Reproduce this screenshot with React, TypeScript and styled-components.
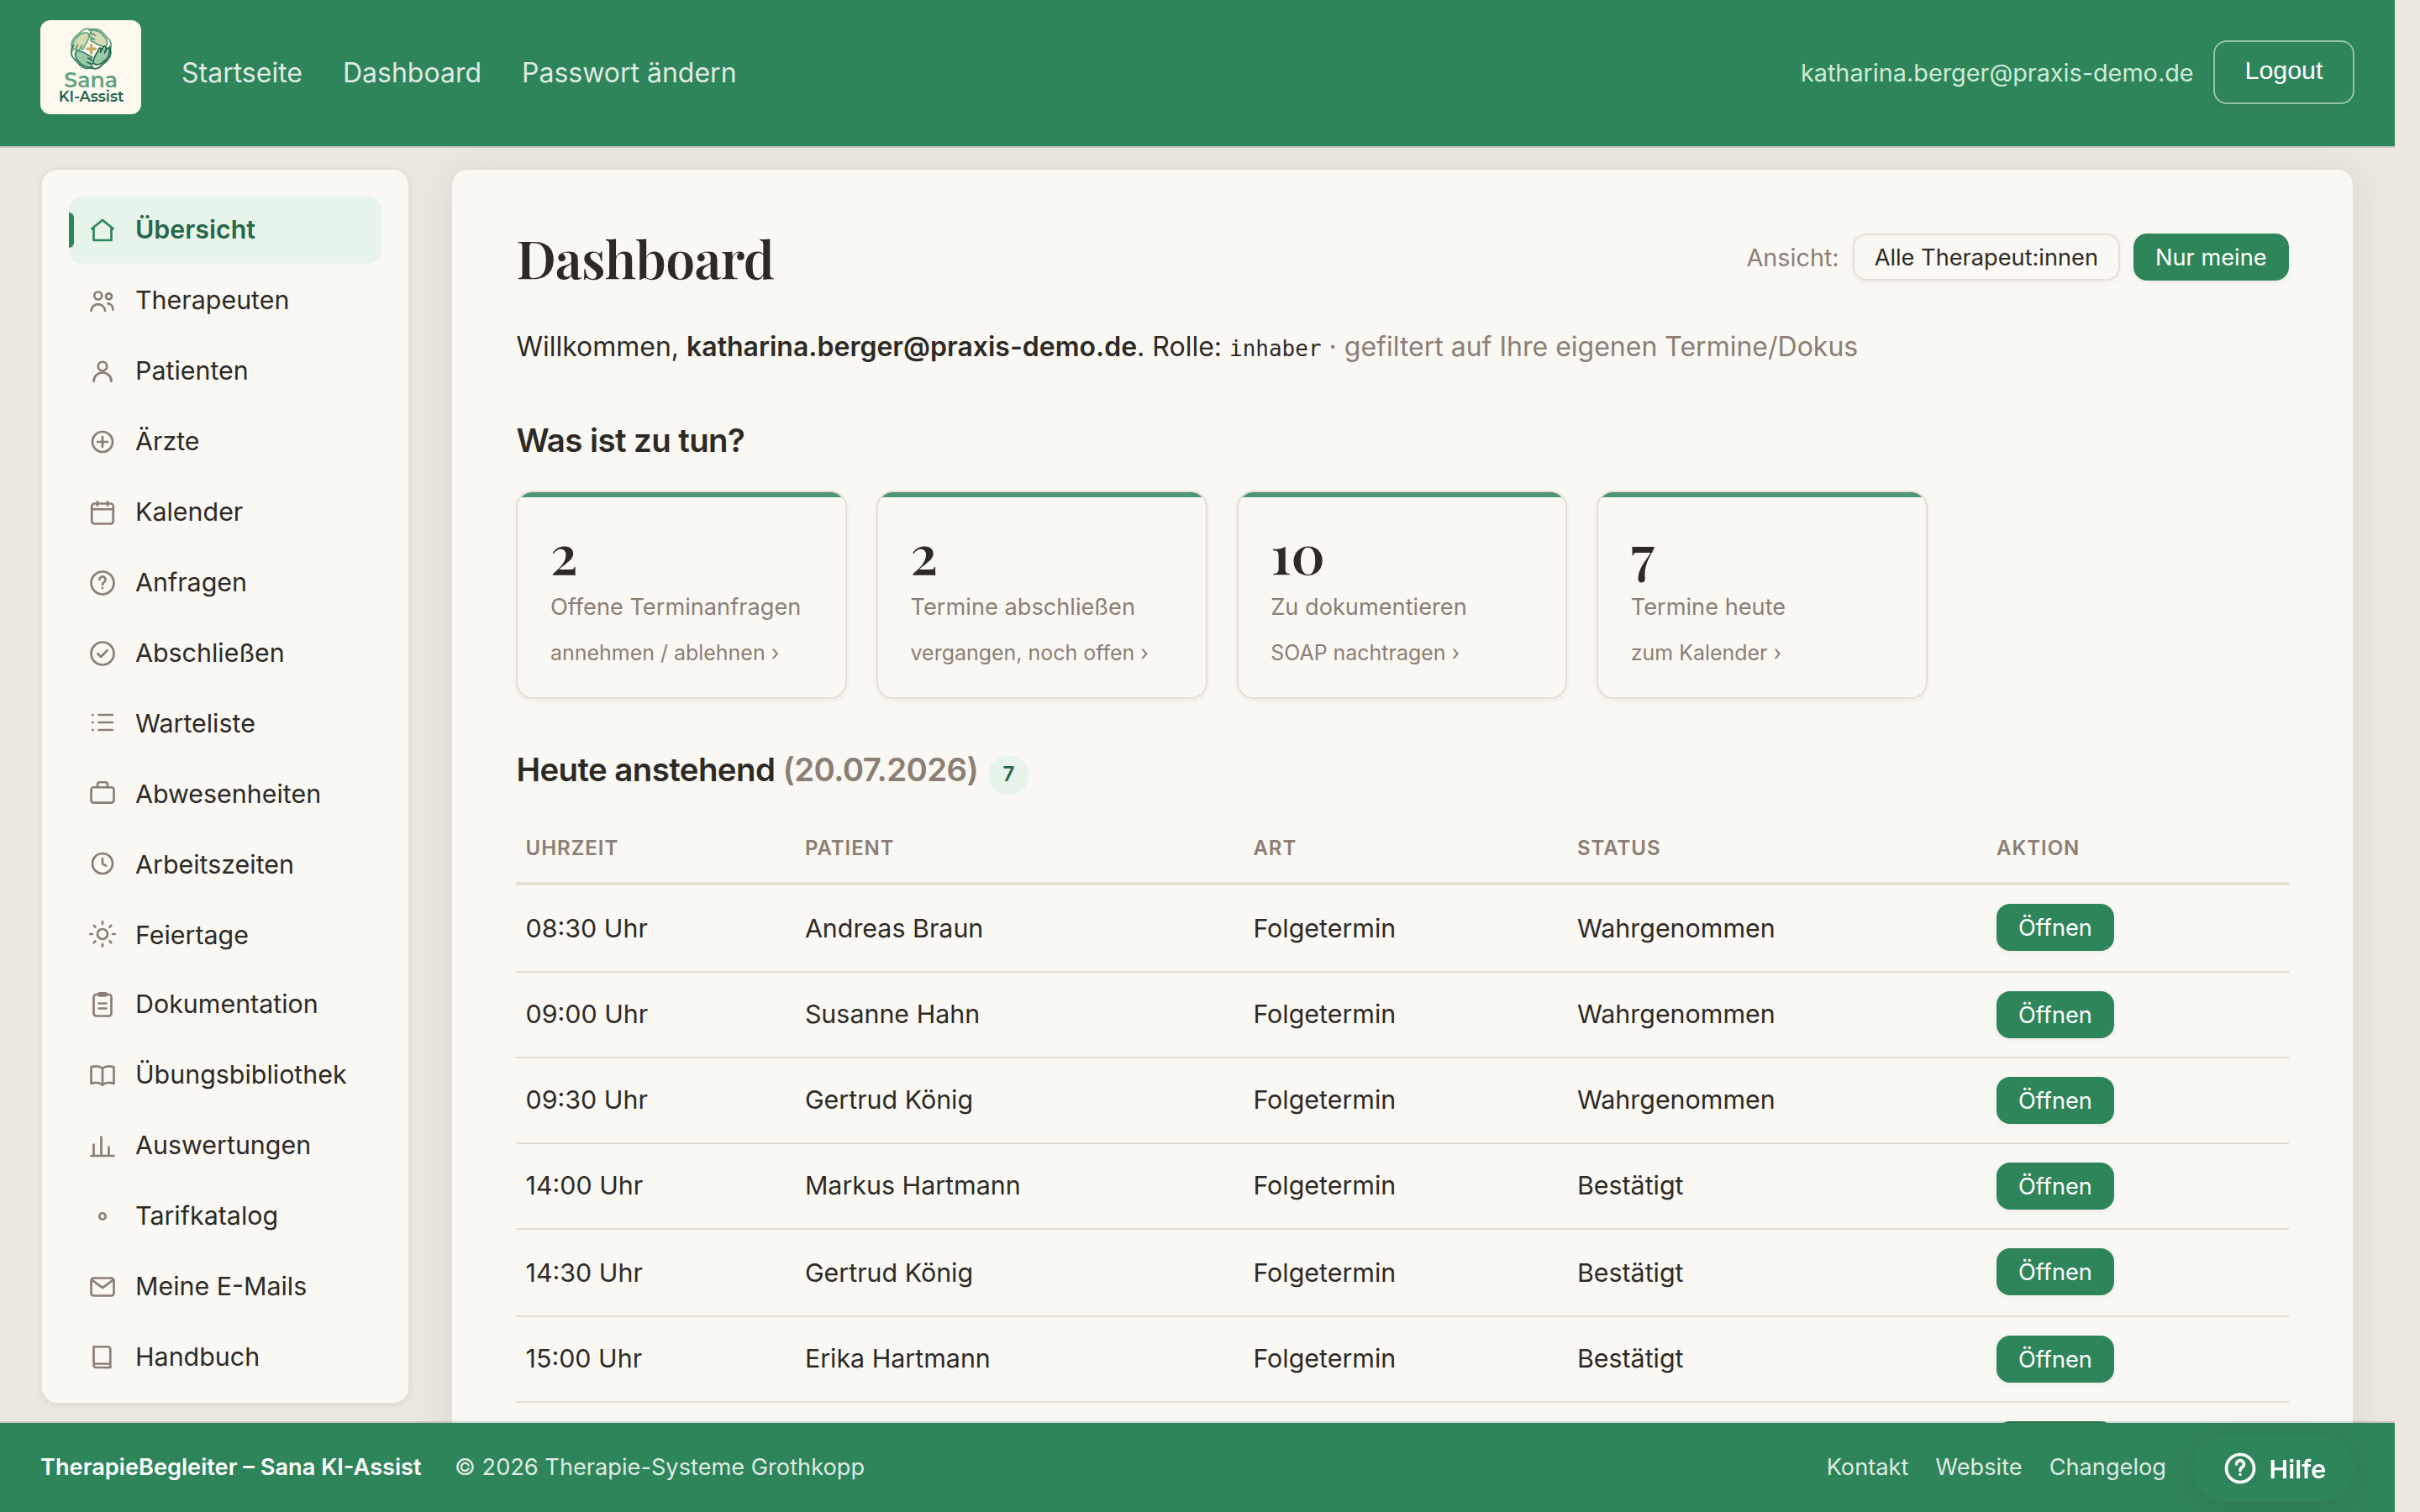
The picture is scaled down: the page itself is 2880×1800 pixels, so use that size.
import React, { useState } from 'react'
import styled, { createGlobalStyle, css } from 'styled-components'

const GlobalStyle = createGlobalStyle`
  *, *::before, *::after {
    box-sizing: border-box;
  }

  body {
    margin: 0;
    background: #ece7e1;
    color: #2d2a26;
    font-family: Inter, 'Liberation Sans', sans-serif;
    overflow: hidden;
  }

  a {
    color: inherit;
    text-decoration: none;
  }
`

const Page = styled.div`
  display: flex;
  flex-direction: column;
  width: 2850px;
  height: 1800px;
`

const Header = styled.header`
  display: flex;
  align-items: center;
  flex-shrink: 0;
  height: 176px;
  padding: 0 48px 2px;
  background: #2f855a;
  background-clip: padding-box;
  border-bottom: 2px solid rgba(0, 0, 0, 0.15);
`

const Logo = styled.svg`
  align-self: flex-start;
  width: 120px;
  height: 112px;
  margin: 24px 48px 0 0;
  border-radius: 12px;
  background: #fdf9ee;
`

const Nav = styled.nav`
  display: flex;
  gap: 48px;
  font-size: 32px;
  color: rgba(255, 255, 255, 0.85);
`

const UserEmail = styled.span`
  margin-left: auto;
  margin-right: 23.4px;
  font-size: 28.8px;
  color: #cdebd9;
`

const LogoutButton = styled.button`
  width: 168px;
  height: 76px;
  padding: 0 0 5px;
  border: 2px solid rgba(255, 255, 255, 0.5);
  border-radius: 16px;
  background: transparent;
  box-shadow: 0 2px 6px rgba(0, 0, 0, 0.08);
  color: #fff;
  font-family: 'Liberation Sans', Arial, sans-serif;
  font-size: 30.4px;
`

const Body = styled.div`
  display: flex;
  align-items: flex-start;
  flex-shrink: 0;
  gap: 48px;
  height: 1518px;
  padding: 24px 48px 0;
  overflow: hidden;
`

const Sidebar = styled.aside`
  display: flex;
  flex-direction: column;
  gap: 4px;
  flex-shrink: 0;
  width: 440px;
  height: 1472px;
  padding: 32px;
  border: 2px solid #e5dfd3;
  border-radius: 20px;
  background: #faf8f3;
  box-shadow: 0 2px 6px rgba(45, 42, 38, 0.06);
`

const SidebarLink = styled.a<{ $active?: boolean; $low?: boolean }>`
  position: relative;
  display: flex;
  align-items: center;
  flex-shrink: 0;
  gap: 21px;
  height: 80px;
  padding: 0 22px;
  border-radius: 16px;
  font-size: 30.4px;
  line-height: 36px;

  /* the first group sits slightly closer to the second one */
  &:nth-child(8) {
    margin-top: -2px;
  }

  svg {
    width: 36px;
    height: 36px;
    color: #8b7e74;
  }

  span {
    padding: ${(p) => (p.$low ? '2px 0 0' : '0 0 2px')};
  }

  ${(p) =>
    p.$active &&
    css`
      background: #e6f4ea;
      color: #276749;
      font-weight: 600;

      svg {
        color: #2f855a;
      }

      &::before {
        content: '';
        position: absolute;
        left: 0;
        top: 19px;
        width: 6px;
        height: 42px;
        border-radius: 0 6px 6px 0;
        background: #2f855a;
      }
    `}
`

const Main = styled.main`
  flex: 1;
  height: 1600px;
  padding: 66px 76.4px;
  border: 2px solid #e5dfd3;
  border-radius: 20px;
  background: #faf8f3;
  box-shadow: 0 6px 48px rgba(45, 42, 38, 0.09);
`

const TitleRow = styled.div`
  display: flex;
  align-items: center;
  justify-content: space-between;
  height: 76px;
`

const Title = styled.h1`
  margin: 0;
  font-family: 'Playfair Display', 'Liberation Serif', serif;
  font-size: 62.4px;
  font-weight: 600;
  letter-spacing: -0.01em;
  line-height: 76px;
`

const ViewSwitch = styled.div`
  display: flex;
  align-items: center;
  gap: 16px;
  font-size: 28.8px;
  color: #8b7e74;
`

const SmallButton = styled.button<{ $primary?: boolean }>`
  min-width: 140px;
  height: 56px;
  padding: 1px 24px 0;
  border: 2px solid ${(p) => (p.$primary ? '#2f855a' : '#e5dfd3')};
  border-radius: 16px;
  background: ${(p) => (p.$primary ? '#2f855a' : '#faf8f3')};
  box-shadow: 0 2px 6px rgba(45, 42, 38, 0.06);
  color: ${(p) => (p.$primary ? '#fff' : '#2d2a26')};
  font-family: inherit;
  font-size: 27.2px;
  line-height: 51px;
`

const Welcome = styled.p`
  margin: 43px 0 0;
  font-size: 32px;
  line-height: 52px;

  strong {
    font-weight: 600;
  }

  code {
    font-family: 'DejaVu Sans Mono', monospace;
    font-size: 26px;
    line-height: 1;
  }
`

const Muted = styled.span`
  color: #8b7e74;
`

const SectionTitle = styled.h2<{ $top: number }>`
  display: flex;
  align-items: center;
  height: 48px;
  margin: ${(p) => p.$top}px 0 0;
  font-size: 38.4px;
  font-weight: 600;
  letter-spacing: -0.015em;
  line-height: 48px;
  white-space: pre;
`

const CountBadge = styled.span`
  width: 48px;
  height: 46px;
  margin: 14px 0 0 12px;
  padding-bottom: 3px;
  border-radius: 24px;
  background: #e6f4ea;
  color: #276749;
  font-size: 24px;
  letter-spacing: 0;
  line-height: 43px;
  text-align: center;
`

const TodoGrid = styled.div`
  display: grid;
  grid-template-columns: repeat(4, 393.6px);
  gap: 35px;
  margin-top: 36px;
`

const TodoCard = styled.a`
  display: block;
  height: 248px;
  padding: 34px 38.6px 0;
  border: 2px solid #e5dfd3;
  border-radius: 20px;
  background: #faf8f3;
  box-shadow: 0 2px 6px rgba(45, 42, 38, 0.06);
  color: #8b7e74;
  overflow: hidden;

  &::before {
    content: '';
    display: block;
    height: 6px;
    margin: -34px -39px 34px;
    background: #4e9672;
  }
`

const TodoNumber = styled.div`
  color: #2d2a26;
  font-family: 'Playfair Display', 'Liberation Serif', serif;
  font-size: 64px;
  font-weight: 600;
  line-height: 64px;
`

const TodoLabel = styled.div`
  margin-top: 13px;
  font-size: 27.2px;
  line-height: 40px;
`

const TodoHint = styled.div`
  margin-top: 14px;
  font-size: 24.96px;
  line-height: 40px;
`

const Table = styled.table`
  width: 100%;
  margin-top: 32px;
  border-collapse: separate;
  border-spacing: 0;
  table-layout: fixed;
`

const Th = styled.th<{ $width?: number }>`
  width: ${(p) => (p.$width ? `${p.$width}px` : 'auto')};
  height: 82px;
  padding: 0 11.2px 20px;
  border-bottom: 4px solid #e5dfd3;
  color: #8b7e74;
  font-size: 24px;
  font-weight: 600;
  letter-spacing: 0.04em;
  line-height: 40px;
  text-align: left;
  text-transform: uppercase;
  vertical-align: bottom;
`

const Td = styled.td<{ $height: number }>`
  height: ${(p) => p.$height}px;
  padding: 0 11.2px 21px;
  border-bottom: 2px solid #e5dfd3;
  font-size: 30.4px;
  line-height: 60px;
  vertical-align: bottom;
`

const ActionTd = styled(Td)`
  padding: 22px 11.2px 0;
  line-height: 0;
  vertical-align: top;
`

const Footer = styled.footer`
  position: relative;
  display: flex;
  align-items: center;
  flex-shrink: 0;
  height: 108px;
  margin-top: -2px;
  padding: 0 272px 2px 48px;
  background: #2f855a;
  background-clip: padding-box;
  border-top: 2px solid rgba(0, 0, 0, 0.15);
  color: rgba(255, 255, 255, 0.85);
  font-size: 27.2px;

  strong {
    margin-right: 39.4px;
    color: #fff;
    font-weight: 600;
  }
`

const FooterLinks = styled.nav`
  display: flex;
  gap: 32px;
  margin-left: auto;
`

const HelpButton = styled.button`
  position: fixed;
  left: 2610px;
  top: 1708px;
  display: flex;
  align-items: center;
  gap: 12.6px;
  width: 192px;
  height: 80px;
  padding: 0 0 0 34px;
  border: none;
  border-radius: 40px;
  background: #2f855a;
  box-shadow: 0 8px 40px rgba(45, 42, 38, 0.14);
  color: #fff;
  font-family: inherit;
  font-size: 30.4px;
  font-weight: 600;

  svg {
    width: 44px;
    height: 44px;
  }

  span {
    padding-top: 2px;
  }
`

const Icon: React.FC<{ children: React.ReactNode; width?: number }> = ({ children, width = 1.8 }) => (
  <svg
    viewBox="0 0 24 24"
    fill="none"
    stroke="currentColor"
    strokeWidth={width}
    strokeLinecap="round"
    strokeLinejoin="round"
  >
    {children}
  </svg>
)

const question = (
  <>
    <circle cx="12" cy="12" r="9" />
    <path d="M9.6 9.3a2.4 2.4 0 1 1 3.6 2.1c-.8.5-1.2 1-1.2 2M12 16h.01" />
  </>
)

const navItems: { label: string; icon: React.ReactNode; low?: boolean }[] = [
  { label: 'Übersicht', icon: <path d="M3.6 10.8 12 4l8.4 6.8M5 9.8V20h14V9.8" /> },
  {
    label: 'Therapeuten',
    icon: (
      <>
        <circle cx="8.5" cy="8" r="3" />
        <path d="M3 20a5.5 5.2 0 0 1 11 0" />
        <circle cx="17" cy="8.6" r="2.3" />
        <path d="M16.2 14.3c2.5.1 4.1 2 4.1 4.8" />
      </>
    ),
  },
  {
    label: 'Patienten',
    icon: (
      <>
        <circle cx="12" cy="8" r="3.5" />
        <path d="M5 20a7 7 0 0 1 14 0" />
      </>
    ),
  },
  {
    label: 'Ärzte',
    icon: (
      <>
        <circle cx="12" cy="12" r="8" />
        <path d="M12 8v8M8 12h8" />
      </>
    ),
  },
  {
    label: 'Kalender',
    icon: (
      <>
        <rect x="3.5" y="5" width="17" height="16" rx="2" />
        <path d="M3.5 9.5h17M8 3.5v3M16 3.5v3" />
      </>
    ),
  },
  { label: 'Anfragen', icon: question },
  {
    label: 'Abschließen',
    icon: (
      <>
        <circle cx="12" cy="12" r="9" />
        <path d="M8.3 12.2l2.5 2.5 5-5.3" />
      </>
    ),
  },
  { label: 'Warteliste', low: true, icon: <path d="M9 6h11M9 12h11M9 18h11M4.1 6h.3M4.1 12h.3M4.1 18h.3" /> },
  {
    label: 'Abwesenheiten',
    low: true,
    icon: (
      <>
        <rect x="3" y="7.5" width="18" height="12.2" rx="2" />
        <path d="M8 7.5V5.3a1.8 1.8 0 0 1 1.8-1.8h4.4A1.8 1.8 0 0 1 16 5.3v2.2" />
      </>
    ),
  },
  {
    label: 'Arbeitszeiten',
    low: true,
    icon: (
      <>
        <circle cx="12" cy="12" r="8" />
        <path d="M12 8v4.2l2.8 1.6" />
      </>
    ),
  },
  {
    label: 'Feiertage',
    low: true,
    icon: (
      <>
        <circle cx="12" cy="12" r="4" />
        <path d="M12 2.2v1.7M12 20.1v1.7M2.2 12h1.7M20.1 12h1.7M5.1 5.1l1.2 1.2M17.7 17.7l1.2 1.2M5.1 18.9l1.2-1.2M17.7 6.3l1.2-1.2" />
      </>
    ),
  },
  {
    label: 'Dokumentation',
    icon: (
      <>
        <rect x="5" y="4" width="14" height="17" rx="2" />
        <rect x="8.8" y="2.9" width="6.4" height="2" rx="1" />
        <path d="M9 11h6M9 15h6" />
      </>
    ),
  },
  {
    label: 'Übungsbibliothek',
    icon: (
      <path d="M3 5.6c3.4-1 6.6-.8 9 .9 2.4-1.7 5.6-1.9 9-.9v13c-3.4-1-6.6-.8-9 .9-2.4-1.7-5.6-1.9-9-.9zM12 6.5V20" />
    ),
  },
  { label: 'Auswertungen', icon: <path d="M3 20h18M5 20v-9M11 20V5M17 20v-7" /> },
  { label: 'Tarifkatalog', icon: <circle cx="12" cy="12" r="2.5" /> },
  {
    label: 'Meine E-Mails',
    icon: (
      <>
        <rect x="3" y="5" width="18" height="14" rx="2" />
        <path d="M3.6 6.5l8.4 6.3 8.4-6.3" />
      </>
    ),
  },
  {
    label: 'Handbuch',
    icon: <path d="M5 3.5h11.2a2 2 0 0 1 2 2V20H7a2 2 0 0 1-2-2zM5.3 17h12.9" />,
  },
]

const todos = [
  { count: 2, label: 'Offene Terminanfragen', hint: 'annehmen / ablehnen ›' },
  { count: 2, label: 'Termine abschließen', hint: 'vergangen, noch offen ›' },
  { count: 10, label: 'Zu dokumentieren', hint: 'SOAP nachtragen ›' },
  { count: 7, label: 'Termine heute', hint: 'zum Kalender ›' },
]

const appointments = [
  { time: '08:30 Uhr', patient: 'Andreas Braun', kind: 'Folgetermin', status: 'Wahrgenommen', height: 104 },
  { time: '09:00 Uhr', patient: 'Susanne Hahn', kind: 'Folgetermin', status: 'Wahrgenommen', height: 102 },
  { time: '09:30 Uhr', patient: 'Gertrud König', kind: 'Folgetermin', status: 'Wahrgenommen', height: 102 },
  { time: '14:00 Uhr', patient: 'Markus Hartmann', kind: 'Folgetermin', status: 'Bestätigt', height: 102 },
  { time: '14:30 Uhr', patient: 'Gertrud König', kind: 'Folgetermin', status: 'Bestätigt', height: 104 },
  { time: '15:00 Uhr', patient: 'Erika Hartmann', kind: 'Folgetermin', status: 'Bestätigt', height: 102 },
  { time: '', patient: '', kind: '', status: '', height: 102 },
]

const hands = [
  { angle: 0, fill: '#d8dcb6', stroke: '#6aa883' },
  { angle: 90, fill: '#d8dcb6', stroke: '#5b9c7a' },
  { angle: 180, fill: '#9ccaa8', stroke: '#23694f' },
  { angle: 270, fill: '#9ccaa8', stroke: '#2f7a5c' },
]

const BrandLogo: React.FC = () => (
  <Logo viewBox="0 0 120 112">
    <g transform="translate(60.5 34)" strokeWidth="1.7" strokeLinejoin="round" strokeLinecap="round">
      {hands.map((h) => (
        <g key={h.angle} transform={`rotate(${h.angle})`} stroke={h.stroke} fill="none">
          <path
            fill={h.fill}
            d="M-2-17C-7-21-12-18-15-15-20-12-22-8-22-1-21 2-19 1-18-1L-16-5-18 1C-17 4-15 3-14 1L-11-4-12 0C-10 2-9 0-8-3-5-7-3-11-2-17z"
          />
          <path d="M4-21C0-24-6-25-10-22L-20-13C-24-9-24-3-22 3" />
        </g>
      ))}
    </g>
    <path
      fill="#c4ad66"
      d="M60.6 28c1.1 0 1.8.8 1.8 1.8v2.8h2.9c2.5 0 2.5 3.4 0 3.4h-2.9v2.9c0 2.4-3.5 2.4-3.5 0V36H56c-2.5 0-2.5-3.4 0-3.4h2.9v-2.8c0-1 .7-1.8 1.7-1.8z"
    />
    <text x="60.2" y="80" textAnchor="middle" fontFamily="Montserrat" fontWeight="600" fontSize="25.2" fill="#62a180">
      Sana
    </text>
    <text x="60.6" y="97" textAnchor="middle" fontFamily="Montserrat" fontWeight="600" fontSize="17.6" fill="#1f6350">
      KI-Assist
    </text>
  </Logo>
)

const App: React.FC = () => {
  const [active, setActive] = useState('Übersicht')
  const [onlyMine, setOnlyMine] = useState(true)

  return (
    <>
      <GlobalStyle />
      <Page>
        <Header>
          <BrandLogo />
          <Nav>
            <a>Startseite</a>
            <a>Dashboard</a>
            <a>Passwort ändern</a>
          </Nav>
          <UserEmail>katharina.berger@praxis-demo.de</UserEmail>
          <LogoutButton>Logout</LogoutButton>
        </Header>

        <Body>
          <Sidebar>
            {navItems.map((item) => (
              <SidebarLink
                key={item.label}
                $active={item.label === active}
                $low={item.low}
                onClick={() => setActive(item.label)}
              >
                <Icon>{item.icon}</Icon>
                <span>{item.label}</span>
              </SidebarLink>
            ))}
          </Sidebar>

          <Main>
            <TitleRow>
              <Title>Dashboard</Title>
              <ViewSwitch>
                <span>Ansicht:</span>
                <SmallButton $primary={!onlyMine} onClick={() => setOnlyMine(false)}>
                  Alle Therapeut:innen
                </SmallButton>
                <SmallButton $primary={onlyMine} onClick={() => setOnlyMine(true)}>
                  Nur meine
                </SmallButton>
              </ViewSwitch>
            </TitleRow>

            <Welcome>
              Willkommen, <strong>katharina.berger@praxis-demo.de</strong>. Rolle: <code>inhaber</code>{' '}
              <Muted>· gefiltert auf Ihre eigenen Termine/Dokus</Muted>
            </Welcome>

            <SectionTitle $top={61}>Was ist zu tun?</SectionTitle>
            <TodoGrid>
              {todos.map((todo) => (
                <TodoCard key={todo.label}>
                  <TodoNumber>{todo.count}</TodoNumber>
                  <TodoLabel>{todo.label}</TodoLabel>
                  <TodoHint>{todo.hint}</TodoHint>
                </TodoCard>
              ))}
            </TodoGrid>

            <SectionTitle $top={60}>
              Heute anstehend <Muted>(20.07.2026)</Muted>
              <CountBadge>7</CountBadge>
            </SectionTitle>

            <Table>
              <thead>
                <tr>
                  <Th $width={332.3}>Uhrzeit</Th>
                  <Th $width={533.5}>Patient</Th>
                  <Th $width={385.5}>Art</Th>
                  <Th $width={499.1}>Status</Th>
                  <Th>Aktion</Th>
                </tr>
              </thead>
              <tbody>
                {appointments.map((a, i) => (
                  <tr key={i}>
                    <Td $height={a.height}>{a.time}</Td>
                    <Td $height={a.height}>{a.patient}</Td>
                    <Td $height={a.height}>{a.kind}</Td>
                    <Td $height={a.height}>{a.status}</Td>
                    <ActionTd $height={a.height}>
                      <SmallButton $primary>{a.time && 'Öffnen'}</SmallButton>
                    </ActionTd>
                  </tr>
                ))}
              </tbody>
            </Table>
          </Main>
        </Body>

        <Footer>
          <strong>TherapieBegleiter – Sana KI-Assist</strong>
          <span>© 2026 Therapie-Systeme Grothkopp</span>
          <FooterLinks>
            <a>Kontakt</a>
            <a>Website</a>
            <a>Changelog</a>
          </FooterLinks>
        </Footer>

        <HelpButton>
          <Icon width={2}>{question}</Icon>
          <span>Hilfe</span>
        </HelpButton>
      </Page>
    </>
  )
}

export default App
